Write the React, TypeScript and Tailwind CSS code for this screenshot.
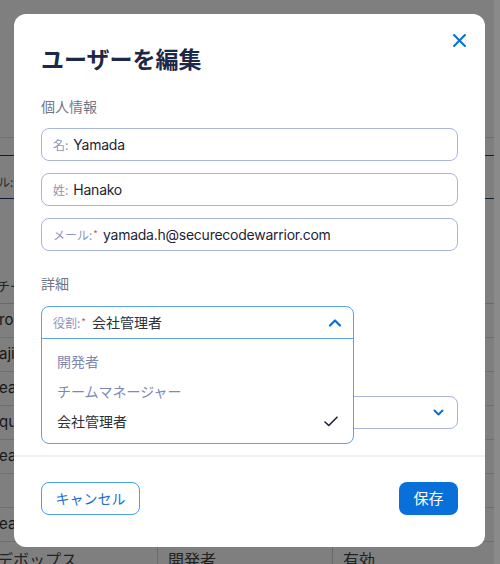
import React from "react";

const jp = { fontFamily: '"Noto Sans CJK JP", "Noto Sans", sans-serif' };
const mix = { fontFamily: 'Inter, "Noto Sans CJK JP", sans-serif' };

function Field({ label, value, required }: { label: string; value: string; required?: boolean }) {
  return (
    <div className="flex h-[33px] items-center rounded-lg border border-[#a9b5d9] px-[11px]">
      <span className="text-[12px] text-[#8c96bd]" style={jp}>
        {label}
        {required && <span className="ml-[1px] align-top text-[10px] text-[#e5484d]">*</span>}
      </span>
      <span className="ml-[5px] text-[14px] tracking-[-0.25px] text-[#1f2433]" style={mix}>
        {value}
      </span>
    </div>
  );
}

function BgRow({ left }: { left: string }) {
  return (
    <div className="flex h-[34px] items-center border-b border-[#dcdfe6] text-[15px] text-[#333]" style={mix}>
      <span className="-ml-[1px]">{left}</span>
    </div>
  );
}

export default function App() {
  return (
    <div className="relative h-[564px] w-[500px] overflow-hidden bg-white" style={jp}>
      {/* background page */}
      <div className="h-full w-[494px]">
        <div className="h-[138px] border-b border-[#dcdfe6]" />
        <div className="mt-[17px] flex h-[44px] items-end border-y border-[#1d3a6e] pb-[7px] text-[12px] text-[#555]">
          <span className="-ml-[2px]">ル:</span>
        </div>
        <div className="h-[76px]" />
        <div className="flex h-[29px] items-start border-b border-[#cfd3dc] pt-[1px] text-[13px] text-[#444]">
          <span className="-ml-[3px]">チーム</span>
        </div>
        <BgRow left="ron" />
        <BgRow left="aji" />
        <BgRow left="ea" />
        <BgRow left="qu" />
        <BgRow left="ea" />
        <BgRow left="" />
        <BgRow left="ea" />
        <div className="flex h-[34px] items-center text-[16px] text-[#444]">
          <span className="-ml-[3px] w-[160px]">デボップス</span>
          <span className="flex h-full w-[175px] items-center border-l border-[#cfd3dc] pl-[10px]">開発者</span>
          <span className="flex h-full items-center border-l border-[#cfd3dc] pl-[10px]">有効</span>
        </div>
      </div>
      <div className="absolute right-0 top-0 h-full w-[6px] bg-[#8a8a8a]" />
      {/* overlay */}
      <div className="absolute left-0 top-0 h-full w-[494px] bg-black/50" />

      {/* modal */}
      <div className="absolute left-[14px] top-[14px] flex h-[533px] w-[471px] flex-col rounded-xl bg-white">
        <div className="relative px-[27px] pt-[28px]">
          <button className="absolute right-[19px] top-[20px] text-[#0a6fd8]">
            <svg width="13" height="13" viewBox="0 0 12 12" fill="none" stroke="currentColor" strokeWidth="1.9" strokeLinecap="round">
              <path d="M1 1L11 11M11 1L1 11" />
            </svg>
          </button>
          <h1 className="text-[23px] font-bold leading-[32px] text-[#1c2847]">ユーザーを編集</h1>
          <div className="mt-[22px] text-[14px] leading-[20px] text-[#717684]">個人情報</div>
          <div className="mt-[12px] flex flex-col gap-[12px]">
            <Field label="名:" value="Yamada" />
            <Field label="姓:" value="Hanako" />
            <Field label="メール:" value="yamada.h@securecodewarrior.com" required />
          </div>
          <div className="mt-[22px] text-[14px] leading-[20px] text-[#717684]">詳細</div>
          <div className="relative mt-[13px]">
            {/* open select */}
            <div className="absolute left-0 top-0 z-10 w-[313px] rounded-lg border border-[#5ca3ea] bg-white">
              <div className="flex h-[32px] items-center border-b border-[#5ca3ea] pl-[11px] pr-[11px]">
                <span className="text-[12px] text-[#8c96bd]">
                  役割:<span className="ml-[1px] align-top text-[10px] text-[#e5484d]">*</span>
                </span>
                <span className="ml-[6px] text-[14px] text-[#2a2f3a]">会社管理者</span>
                <svg className="ml-auto" width="14" height="9" viewBox="0 0 14 9" fill="none" stroke="#0a6fd8" strokeWidth="2.2" strokeLinecap="round" strokeLinejoin="round">
                  <path d="M2 7.5L7 2.5L12 7.5" />
                </svg>
              </div>
              <div className="pb-[7px] pt-[7px]">
                <div className="flex h-[30px] items-center px-[15px] text-[14px] text-[#7d88b5]">開発者</div>
                <div className="flex h-[30px] items-center px-[15px] text-[14px] text-[#7d88b5]">チームマネージャー</div>
                <div className="flex h-[30px] items-center justify-between pl-[15px] pr-[15px] text-[14px] text-[#2a2f3a]">
                  <span>会社管理者</span>
                  <svg width="14" height="11" viewBox="0 0 14 11" fill="none" stroke="#1c2237" strokeWidth="1.6" strokeLinecap="round" strokeLinejoin="round">
                    <path d="M1 6L4.8 9.5L13 1.2" />
                  </svg>
                </div>
              </div>
            </div>
            <div className="h-[32px]" />
            <div className="mt-[58px] flex h-[33px] items-center justify-end rounded-lg border border-[#a9b5d9] pr-[13px]">
              <svg width="11" height="7" viewBox="0 0 11 7" fill="none" stroke="#0a6fd8" strokeWidth="2" strokeLinecap="round" strokeLinejoin="round">
                <path d="M1.5 1.5L5.5 5.5L9.5 1.5" />
              </svg>
            </div>
          </div>
        </div>
        <div className="mt-[26px] h-[2px] bg-[#eef0f6]" />
        <div className="flex items-center justify-between px-[27px] pt-[25px]">
          <button className="flex h-[33px] w-[99px] items-center justify-center rounded-lg border border-[#4a9de9] text-[14px] text-[#1a6fcf]">
            キャンセル
          </button>
          <button className="flex h-[33px] w-[59px] items-center justify-center rounded-lg bg-[#0a70d9] text-[15px] text-white">
            保存
          </button>
        </div>
      </div>
    </div>
  );
}
